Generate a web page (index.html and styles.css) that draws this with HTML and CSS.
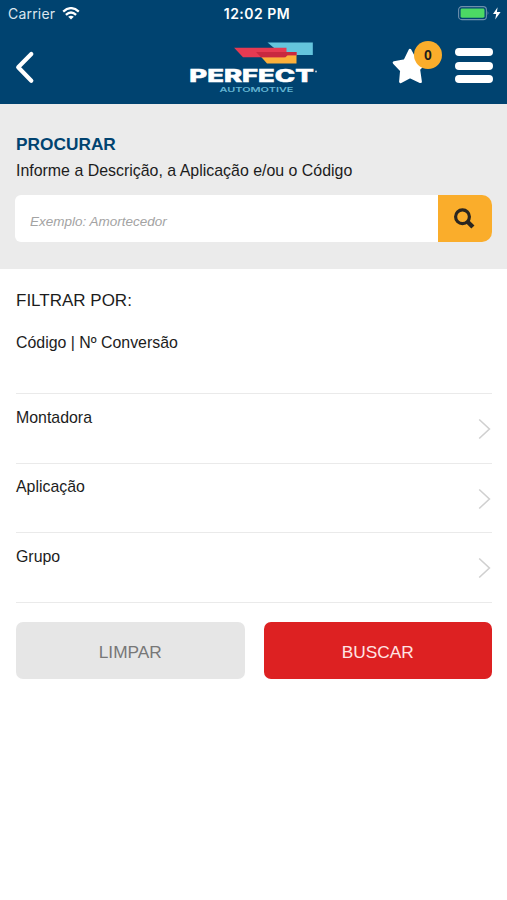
FILE: index.html
```html
<!DOCTYPE html>
<html lang="pt-BR">
<head>
    <meta charset="UTF-8">
    <meta name="viewport" content="width=device-width, initial-scale=1.0">
    <title>Perfect Automotive</title>
    <link rel="stylesheet" href="styles.css">
</head>
<body>
    <!-- Header -->
    <header>
        <div class="status-bar">
            <div class="status-left">
                <span class="carrier">Carrier</span>
                <svg width="18" height="13" viewBox="0 0 18 13" fill="none" stroke="#fff" stroke-width="2.3">
                    <path d="M1.2 4.6 Q9 -2.3 16.8 4.6" />
                    <path d="M3.9 7.9 Q9 3.2 14.1 7.9" />
                    <path d="M9 12.6 L6.2 9.8 Q9 7.6 11.8 9.8 Z" fill="#fff" stroke="none" />
                </svg>
            </div>
            <span class="time">12:02 PM</span>
            <div class="status-right">
                <svg width="44" height="16" viewBox="0 0 44 16">
                    <rect x="0.6" y="0.6" width="27.8" height="13" rx="3.2" fill="none" stroke="#6d8fac" stroke-width="1.1" />
                    <rect x="2.6" y="2.5" width="23.9" height="9.2" rx="1.4" fill="#4cd964" />
                    <path d="M29.6 4.7 Q31.4 7.1 29.6 9.5 Z" fill="#6d8fac" />
                    <path d="M39.6 1.2 L35 8 H38.2 L37.2 13.6 L42.6 6.1 H38.9 Z" fill="#fff" />
                </svg>
            </div>
        </div>
        <nav>
            <a href="#" class="back-btn">
                <svg width="20" height="34" viewBox="0 0 20 34" fill="none" stroke="#fff" stroke-width="4.2" stroke-linecap="round" stroke-linejoin="round">
                    <path d="M16.3 4 L3.2 17.3 L16.3 30.8" />
                </svg>
            </a>
            <svg class="logo" width="134" height="60" viewBox="187.5 38 134 60">
                <path d="M268 42.4 H313.3 V54.9 H283 Z" fill="#64c5dd" />
                <path d="M260 55 H297 V63.4 H267.5 Z" fill="#fbb03b" />
                <path d="M234.6 47.8 H287 V52 H297 V55.2 H287.5 L285 57.2 H243.5 Z" fill="#e63a52" />
                <path d="M256.5 52 H297 V55.2 H288 L286 57.2 H261.5 Z" fill="#c9283f" />
                <text x="189.8" y="82.4" class="logo-name" textLength="124.5" lengthAdjust="spacingAndGlyphs">PERFECT</text>
                <circle cx="316.5" cy="71.5" r="1" fill="#b8cbd9" />
                <text x="220" y="92" class="logo-sub" textLength="74" lengthAdjust="spacingAndGlyphs">AUTOMOTIVE</text>
            </svg>
            <div class="nav-right">
                <a href="#" class="favorites">
                    <svg width="37" height="37" viewBox="0 0 37 37" fill="#fff" stroke="#fff" stroke-width="3" stroke-linejoin="round">
                        <path d="M18 3.4 L23 12.8 L34 14.6 L26.6 22.2 L28.4 34.6 L18 29.6 L8.6 34.6 L9.6 23.4 L2.2 15.6 L13 13.6 Z" />
                    </svg>
                    <span class="badge">0</span>
                </a>
                <a href="#" class="menu-btn">
                    <span></span>
                    <span></span>
                    <span></span>
                </a>
            </div>
        </nav>
    </header>
    <!-- Search -->
    <section class="search-section">
        <h2>PROCURAR</h2>
        <p>Informe a Descrição, a Aplicação e/ou o Código</p>
        <div class="search-box">
            <input type="text" class="search-bar" placeholder="Exemplo: Amortecedor">
            <button class="search-btn">
                <svg width="22" height="22" viewBox="0 0 22 22" fill="none" stroke="#2a2620">
                    <circle cx="8.5" cy="8.7" r="6.9" stroke-width="3.2" />
                    <path d="M13.3 13.5 L18.9 19" stroke-width="4.4" />
                </svg>
            </button>
        </div>
    </section>
    <!-- Filters -->
    <main>
        <h3>FILTRAR POR:</h3>
        <div class="code-filter">Código | Nº Conversão</div>
        <ul class="filters">
            <li>
                <span>Montadora</span>
                <svg width="13" height="22" viewBox="0 0 13 22"><path d="M1.2 1.5 L11.4 11 L1.2 20.5" /></svg>
            </li>
            <li>
                <span>Aplicação</span>
                <svg width="13" height="22" viewBox="0 0 13 22"><path d="M1.2 1.5 L11.4 11 L1.2 20.5" /></svg>
            </li>
            <li>
                <span>Grupo</span>
                <svg width="13" height="22" viewBox="0 0 13 22"><path d="M1.2 1.5 L11.4 11 L1.2 20.5" /></svg>
            </li>
        </ul>
        <div class="buttons">
            <button class="clear-btn">LIMPAR</button>
            <button class="submit-btn">BUSCAR</button>
        </div>
    </main>
</body>
</html>
```
FILE: styles.css
```css
* {
    box-sizing: border-box;
}
body {
    margin: 0;
    font-family: "Liberation Sans", Arial, sans-serif;
    background-color: #fff;
    color: #1c1c1c;
}
header {
    height: 103.5px;
    background-color: #004370;
    color: #fff;
}
.status-bar {
    height: 27px;
    padding: 0 5px 0 8px;
    display: grid;
    grid-template-columns: 1fr auto 1fr;
    align-items: center;
    font-family: Inter, sans-serif;
    font-size: 14px;
}
.status-left {
    display: flex;
    align-items: center;
    gap: 7px;
}
.carrier {
    color: #dbe6ee;
    letter-spacing: 0.2px;
}
.time {
    padding-left: 4px;
    font-weight: 600;
    letter-spacing: 0.5px;
}
.status-right {
    display: flex;
    justify-content: flex-end;
}
nav {
    height: 76px;
    padding: 0 14px 0 15px;
    display: grid;
    grid-template-columns: 1fr auto 1fr;
}
.back-btn {
    padding-top: 23px;
}
.logo {
    margin-top: 11px;
}
.logo-name {
    font-family: Inter, sans-serif;
    font-size: 17px;
    font-weight: 800;
    fill: #fff;
    stroke: #fff;
    stroke-width: 0.5;
}
.logo-sub {
    font-family: Inter, sans-serif;
    font-size: 6.6px;
    font-weight: 600;
    fill: #64b5d3;
}
.nav-right {
    display: flex;
    justify-content: flex-end;
    align-items: flex-start;
    gap: 26px;
}
.favorites {
    position: relative;
    height: 37px;
    margin-top: 20px;
}
.badge {
    position: absolute;
    top: -6px;
    left: 22px;
    width: 28px;
    height: 28px;
    border-radius: 50%;
    background-color: #faad2b;
    color: #1c1c1c;
    font-size: 14px;
    font-weight: bold;
    line-height: 28px;
    text-align: center;
}
.menu-btn {
    width: 38px;
    margin-top: 21px;
    display: flex;
    flex-direction: column;
    gap: 5.5px;
}
.menu-btn span {
    height: 8px;
    border-radius: 4px;
    background-color: #fff;
}
.search-section {
    height: 165.5px;
    padding: 30.5px 15px 0;
    background-color: #ebebeb;
}
.search-section h2 {
    margin: 0 1px;
    color: #004370;
    font-size: 17.3px;
    line-height: 20px;
}
.search-section p {
    margin: 7px 1px 0;
    font-size: 15.93px;
    line-height: 20px;
}
.search-box {
    height: 47px;
    margin-top: 14px;
    display: flex;
    border-radius: 6px 10px 10px 6px;
    overflow: hidden;
}
.search-bar {
    flex: 1;
    padding: 5px 15px 0;
    border: none;
    background-color: #fff;
    font-family: inherit;
    font-size: 13.5px;
    font-style: italic;
}
.search-bar::placeholder {
    color: #a3a3a3;
}
.search-btn {
    width: 54px;
    padding: 0;
    border: none;
    background-color: #faad2b;
    display: flex;
    justify-content: center;
    align-items: center;
}
main {
    padding: 22px 15px 0 16px;
}
h3 {
    margin: 0;
    font-size: 17px;
    font-weight: normal;
    line-height: 20px;
}
.code-filter {
    margin-top: 22px;
    font-size: 15.9px;
    line-height: 20px;
}
.filters {
    list-style: none;
    margin: 40px 0 0;
    padding: 0;
    border-bottom: 1.5px solid #eaeaea;
}
.filters li {
    height: 69.7px;
    padding: 13.5px 1px 0 0;
    border-top: 1.5px solid #eaeaea;
    display: flex;
    justify-content: space-between;
    font-size: 15.9px;
    line-height: 20px;
}
.filters svg {
    margin-top: 10.5px;
    fill: none;
    stroke: #d0d0d0;
    stroke-width: 1.6;
}
.buttons {
    margin-top: 18.5px;
    display: flex;
    gap: 19px;
}
.buttons button {
    flex: 1;
    height: 57.5px;
    padding: 5px 0 0;
    border: none;
    border-radius: 7px;
    font-family: inherit;
    font-size: 17.3px;
}
.clear-btn {
    background-color: #e6e6e6;
    color: #777;
}
.submit-btn {
    background-color: #dd2122;
    color: #ffe5e5;
}
```
